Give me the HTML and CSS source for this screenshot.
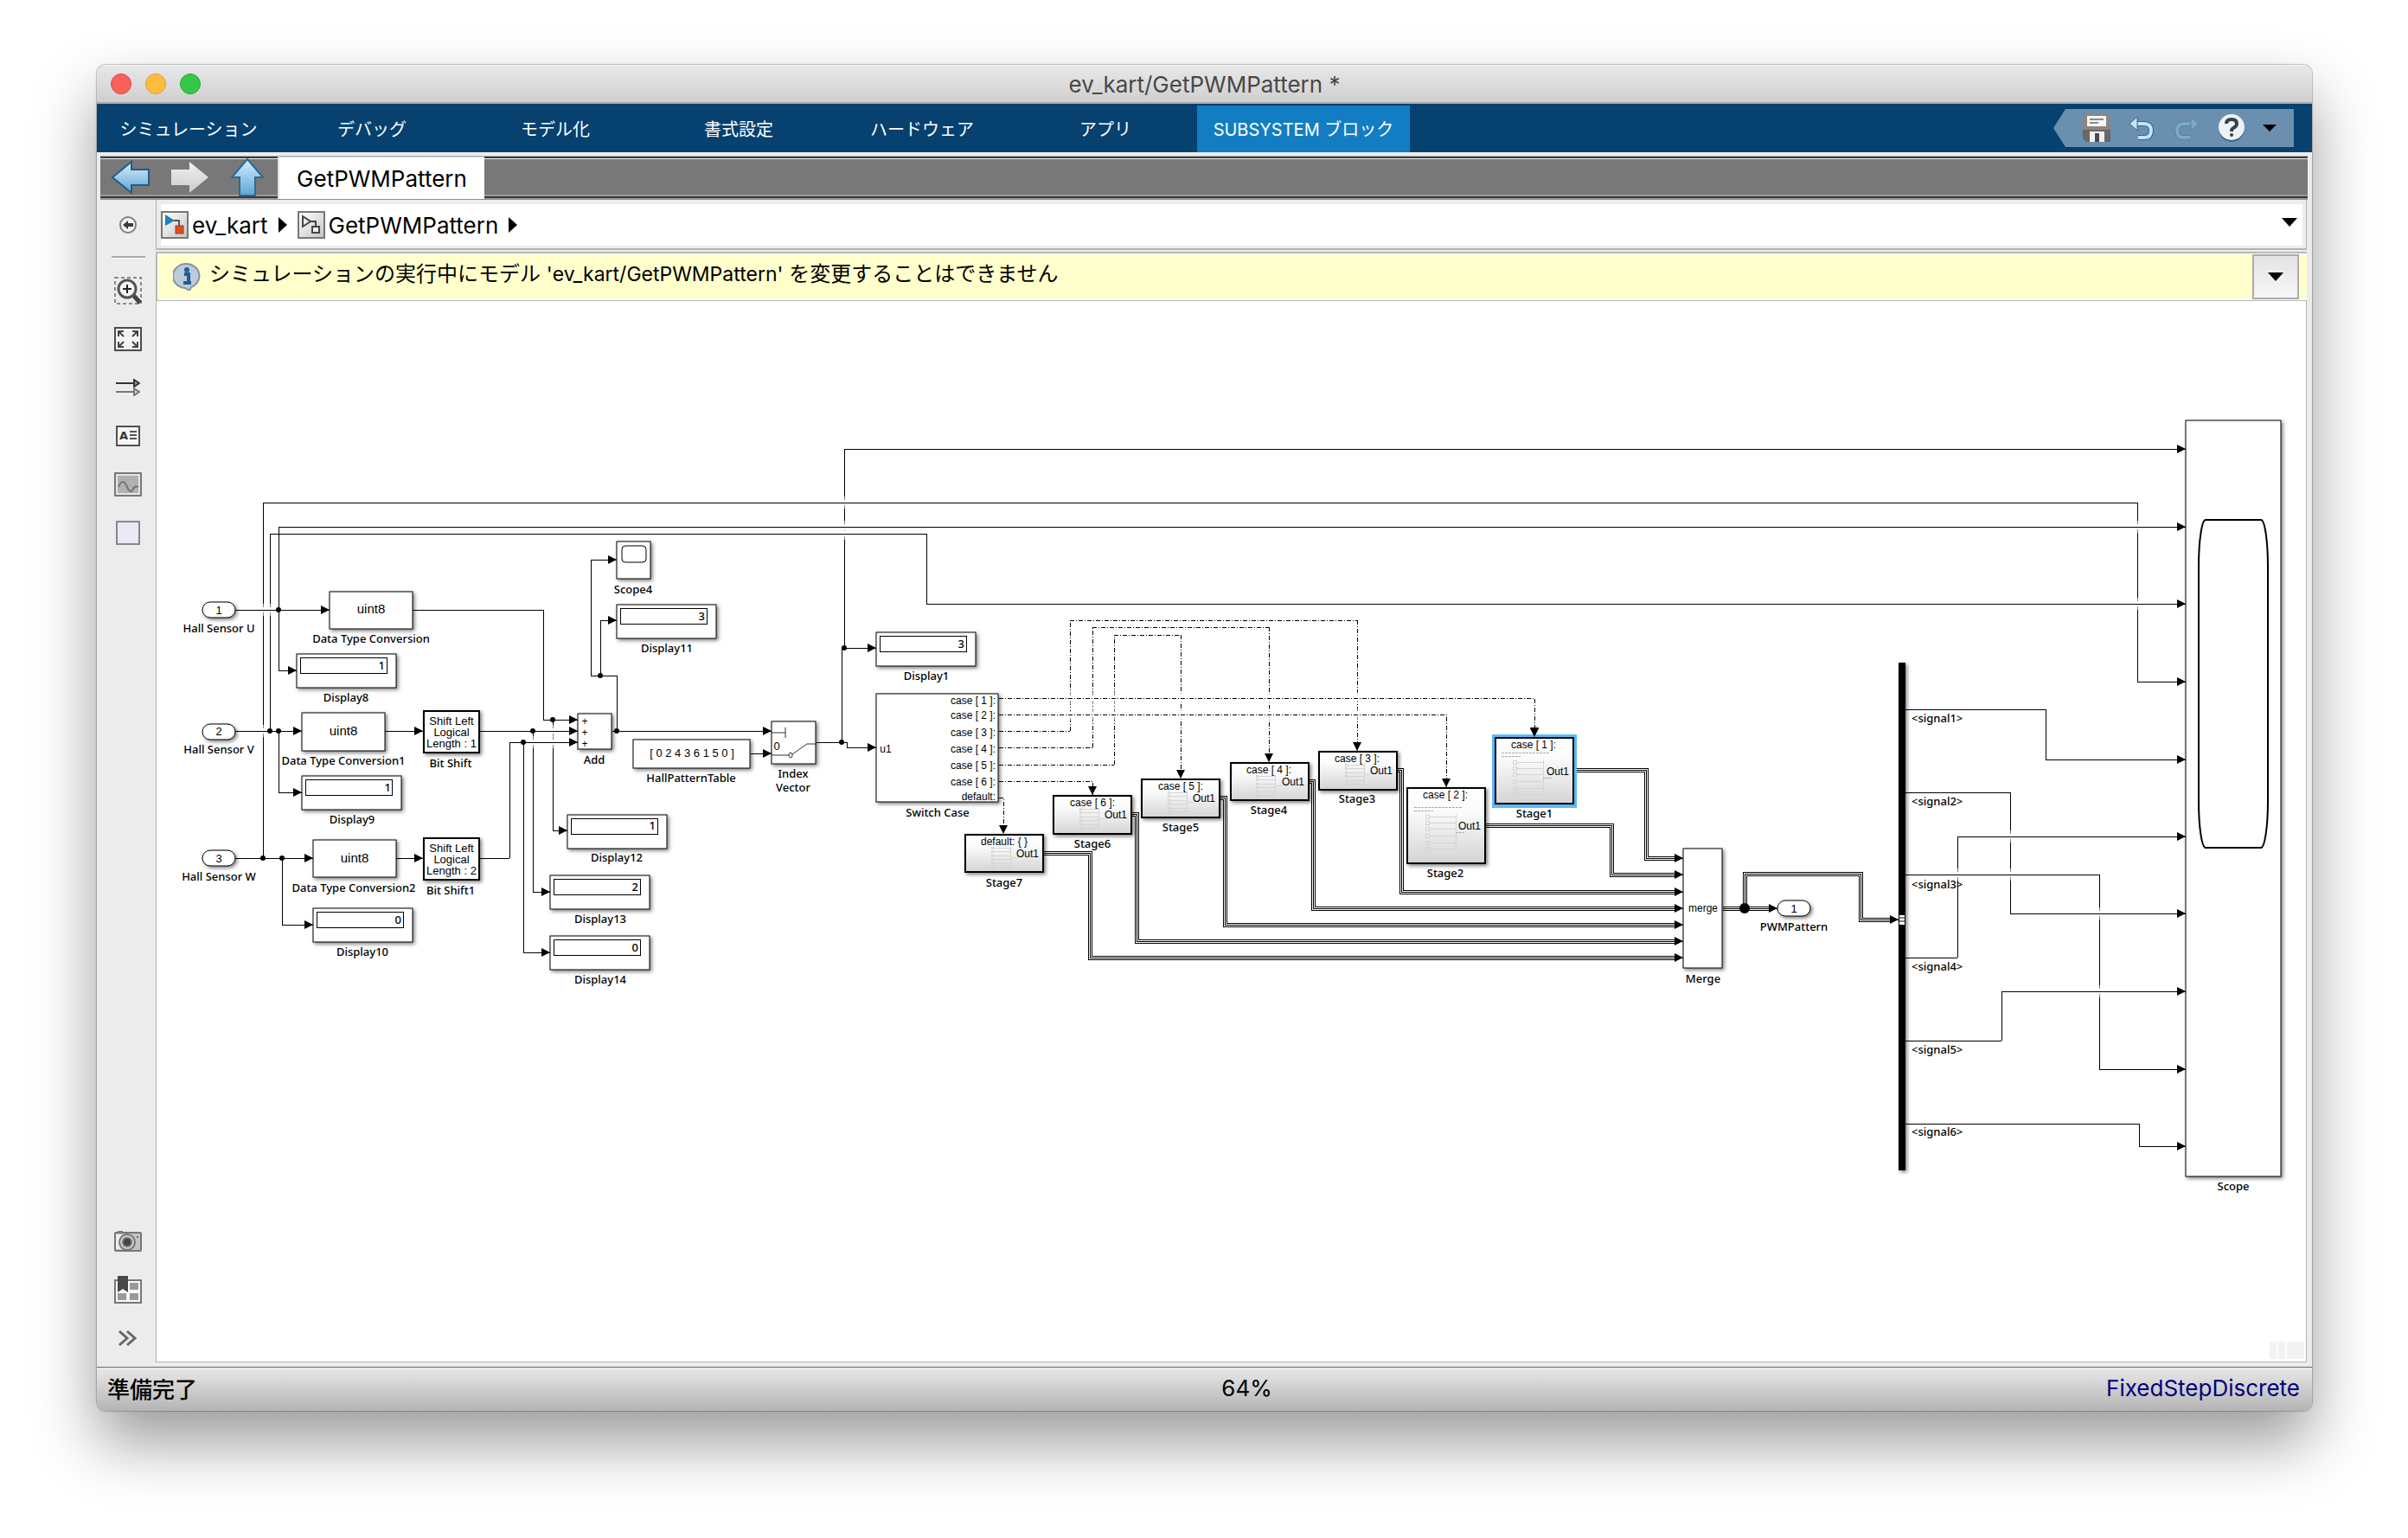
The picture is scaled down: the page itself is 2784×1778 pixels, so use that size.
FILE: index.html
```html
<!DOCTYPE html>
<html lang="ja">
<head>
<meta charset="utf-8">
<title>ev_kart/GetPWMPattern *</title>
<link rel="stylesheet" href="styles.css">
</head>
<body>
<div class="window">
  <header class="titlebar">
    <div class="lights"><button class="light red" aria-label="閉じる"></button><button class="light yellow" aria-label="しまう"></button><button class="light green" aria-label="拡大"></button></div>
    <h1 class="title">ev_kart/GetPWMPattern *</h1>
  </header>

  <nav class="toolstrip">
    <button class="strip-tab">シミュレーション</button>
    <button class="strip-tab">デバッグ</button>
    <button class="strip-tab">モデル化</button>
    <button class="strip-tab">書式設定</button>
    <button class="strip-tab">ハードウェア</button>
    <button class="strip-tab">アプリ</button>
    <button class="strip-tab active">SUBSYSTEM ブロック</button>
    <div class="quick">
      <button class="tool" aria-label="保存"><svg width="32" height="32" viewBox="0 0 32 32"><path d="M0 0h32v32H4l-4-4z" fill="#6b6765"/><path d="M0 0h32v18H0z" fill="#8b8684"/><path d="M5 2h22v12H5z" fill="#f4f4f4"/><path d="M8 6h16M8 10h10" stroke="#8a8a8a" stroke-width="2"/><path d="M8 20h17v12H8z" fill="#f0f0f0"/><path d="M14 22h5v10h-5z" fill="#4a4a4a"/></svg></button>
      <button class="tool" aria-label="元に戻す"><svg width="32" height="32" viewBox="0 0 32 32"><path d="M7 11h12q8 0 8 8t-8 8h-7" fill="none" stroke="#2f6590" stroke-width="6"/><path d="M7 11h12q8 0 8 8t-8 8h-7" fill="none" stroke="#c3e2f3" stroke-width="4"/><path d="M11 3v16L2 11z" fill="#c9e6f5" stroke="#2f6590"/></svg></button>
      <button class="tool" aria-label="やり直し"><svg width="32" height="32" viewBox="0 0 32 32"><path d="M24 11H13q-8 0-8 8t8 8h7" fill="none" stroke="#4f83aa" stroke-width="6"/><path d="M24 11H13q-8 0-8 8t8 8h7" fill="none" stroke="#7fa8c5" stroke-width="4"/><path d="M21 3v16l9-8z" fill="#7fa8c5" stroke="#4f83aa"/></svg></button>
      <button class="tool" aria-label="ヘルプ"><svg width="32" height="32" viewBox="0 0 32 32"><circle cx="16" cy="17" r="15" fill="#38658a"/><circle cx="16" cy="15" r="15" fill="#eef2f5"/><path d="M10 11q0-5 6-5t6 5q0 3-4 5-2 1-2 4" fill="none" stroke="#33424f" stroke-width="4"/><circle cx="16" cy="24" r="2" fill="#33424f"/></svg></button>
      <button class="tool narrow" aria-label="その他"><svg width="16" height="8" viewBox="0 0 16 8"><path d="M0 0h16L8 8z"/></svg></button>
    </div>
  </nav>

  <div class="docbar">
    <div class="nav-arrows">
      <button class="nav-btn" aria-label="戻る"><svg width="46" height="40" viewBox="0 0 46 40"><path d="M2 20L24 2v9h20v18H24v9z" fill="url(#blue)" stroke="#245b86" stroke-width="2"/></svg></button>
      <button class="nav-btn" aria-label="進む"><svg width="46" height="40" viewBox="0 0 46 40"><path d="M44 20L22 2v9H1v18h21v9z" fill="url(#silver)"/></svg></button>
      <button class="nav-btn" aria-label="上へ"><svg width="40" height="44" viewBox="0 0 40 44"><path d="M20 1L38 22h-9v21H11V22H2z" fill="url(#blue)" stroke="#2c6a9a" stroke-width="2"/></svg></button>
    </div>
    <button class="doc-tab">GetPWMPattern</button>
  </div>

  <div class="work">
    <aside class="palette">
      <button class="tool" aria-label="エクスプローラーを隠す"><svg width="24" height="24" viewBox="0 0 24 24"><circle cx="12" cy="12" r="9" fill="#f4f4f4" stroke="#808080" stroke-width="2"/><path d="M6 12l6-5v3h6v4h-6v3z" fill="#3c3c3c"/></svg></button>
      <hr class="rule">
      <button class="tool" aria-label="ズーム"><svg width="32" height="32" viewBox="0 0 32 32"><rect x="1" y="1" width="30" height="30" fill="none" stroke="#8a8a8a" stroke-width="2" stroke-dasharray="4 3"/><path d="M21 20l9 10" stroke="#444" stroke-width="5"/><circle cx="15" cy="14" r="10" fill="#f6f6f6" stroke="#555" stroke-width="3"/><path d="M10 14h10M15 9v10" stroke="#222" stroke-width="2"/></svg></button>
      <button class="tool" aria-label="ビューに合わせる"><svg width="32" height="28" viewBox="0 0 32 28"><rect x="1" y="1" width="30" height="26" fill="#f3f3f3" stroke="#4c4c4c" stroke-width="2"/><path d="M5 11V5h6M21 5h6v6M27 17v6h-6M11 23H5v-6M5 5l6 6M27 5l-6 6M27 23l-6-6M5 23l6-6" fill="none" stroke="#444" stroke-width="2"/></svg></button>
      <button class="tool" aria-label="サンプル時間"><svg width="28" height="20" viewBox="0 0 28 20"><path d="M0 5h22" stroke="#333" stroke-width="2"/><path d="M21 1l6 4-6 4z" fill="#999" stroke="#333" stroke-width="2"/><path d="M0 15h22" stroke="#777" stroke-width="2"/><path d="M21 11l6 4-6 4z" fill="#ccc" stroke="#777" stroke-width="2"/></svg></button>
      <button class="tool" aria-label="注釈"><svg width="28" height="24" viewBox="0 0 28 24"><rect x="1" y="1" width="26" height="22" fill="#f5f5f7" stroke="#505050" stroke-width="2"/><text x="4" y="16" class="glyph">A</text><path d="M16 7h8M16 11h8M16 15h8" stroke="#555" stroke-width="2"/></svg></button>
      <button class="tool" aria-label="イメージ"><svg width="32" height="28" viewBox="0 0 32 28"><rect x="1" y="1" width="30" height="26" fill="#e6e6e6" stroke="#777" stroke-width="2"/><path d="M4 4h24v20H4z" fill="#b0b0b0"/><path d="M5 17q5-12 10 0 4 9 7 2 2-4 6-2" fill="none" stroke="#777" stroke-width="2"/></svg></button>
      <button class="tool" aria-label="領域"><svg width="28" height="28" viewBox="0 0 28 28"><rect x="1" y="1" width="26" height="26" fill="#e8e8f7" stroke="#888" stroke-width="2"/></svg></button>
      <span class="spacer"></span>
      <button class="tool" aria-label="スクリーンショット"><svg width="32" height="26" viewBox="0 0 32 26"><path d="M4 1h6v3H4z" fill="#777"/><rect x="1" y="3" width="30" height="21" rx="1" fill="#c4c4c4" stroke="#777" stroke-width="2"/><path d="M2 5h6v17H2z" fill="#eee"/><circle cx="15" cy="14" r="9" fill="#ccc" stroke="#777" stroke-width="2"/><circle cx="15" cy="14" r="5" fill="#444" stroke="#777" stroke-width="2"/><circle cx="27" cy="8" r="1" fill="#555"/></svg></button>
      <button class="tool" aria-label="モデルブラウザー"><svg width="32" height="32" viewBox="0 0 32 32"><rect x="1" y="5" width="30" height="26" fill="#fafafa" stroke="#777" stroke-width="2"/><path d="M18 8h10v8H18zM18 20h10v8H18zM4 20h10v8H4z" fill="#999"/><path d="M4 0h12v19l-6-4-6 4z" fill="#484848"/></svg></button>
      <button class="tool" aria-label="展開"><svg width="22" height="20" viewBox="0 0 22 20"><path d="M1 2l9 8-9 8M10 2l9 8-9 8" fill="none" stroke="#666" stroke-width="3"/></svg></button>
    </aside>

    <main class="editor">
      <div class="crumbs">
        <div class="crumb-field">
          <a class="crumb" href="#root"><svg width="32" height="32" viewBox="0 0 32 32"><rect x="1" y="1" width="30" height="30" fill="url(#tile)" stroke="#777" stroke-width="2"/><path d="M5 4l11 7-11 6z" fill="#1d7fc0"/><path d="M15 11h6v6" fill="none" stroke="#555" stroke-width="2"/><rect x="17" y="17" width="9" height="9" fill="#d9501e" stroke="#a33" stroke-width="1"/></svg>ev_kart</a>
          <svg class="sep" width="10" height="18" viewBox="0 0 10 18"><path d="M0 0l10 9-10 9z"/></svg>
          <a class="crumb" href="#sub"><svg width="32" height="32" viewBox="0 0 32 32"><rect x="1" y="1" width="30" height="30" fill="url(#tile)" stroke="#777" stroke-width="2"/><path d="M6 6l9 6-9 6z" fill="#eee" stroke="#444" stroke-width="2"/><path d="M15 12h6v5" fill="none" stroke="#444" stroke-width="2"/><rect x="17" y="18" width="8" height="7" fill="#eee" stroke="#444" stroke-width="2"/></svg>GetPWMPattern</a>
          <svg class="sep" width="10" height="18" viewBox="0 0 10 18"><path d="M0 0l10 9-10 9z"/></svg>
          <button class="crumb-menu" aria-label="履歴"><svg width="18" height="10" viewBox="0 0 18 10"><path d="M0 0h18L9 10z"/></svg></button>
        </div>
      </div>

      <div class="notice">
        <svg width="32" height="32" viewBox="0 0 32 32"><path d="M16 1a15 14 0 0 1 5 27l-2 4-5-3A15 14 0 0 1 16 1z" fill="#bccbd8" stroke="#8595a3" stroke-width="2"/><path d="M13 13h5v10M12 23h9" fill="none" stroke="#1c5f95" stroke-width="4"/><circle cx="16" cy="8" r="3" fill="#1c5f95"/></svg>
        <p class="notice-text">シミュレーションの実行中にモデル <span class="latin">'ev_kart/GetPWMPattern'</span> を変更することはできません</p>
        <button class="notice-menu" aria-label="通知メニュー"><svg width="18" height="10" viewBox="0 0 18 10"><path d="M0 0h18L9 10z"/></svg></button>
      </div>

      <div class="canvas">
        <svg class="diagram" width="100%" height="100%">
          <defs>
            <linearGradient id="blue" x1="0" y1="0" x2="0" y2="1"><stop offset="0" stop-color="#d6effb"/><stop offset="1" stop-color="#5fa5d6"/></linearGradient>
            <linearGradient id="silver" x1="0" y1="0" x2="0" y2="1"><stop offset="0" stop-color="#f0f0f0"/><stop offset="1" stop-color="#cccccc"/></linearGradient>
            <linearGradient id="tile" x1="0" y1="0" x2="1" y2="1"><stop offset="0" stop-color="#ffffff"/><stop offset="1" stop-color="#c4c4c4"/></linearGradient>
            <linearGradient id="shade" x1="0" y1="0" x2="0" y2="1"><stop offset="0" stop-color="#ffffff"/><stop offset="0.3" stop-color="#fbfbfb"/><stop offset="1" stop-color="#d4d4d4"/></linearGradient>
            <marker id="tip" markerUnits="userSpaceOnUse" markerWidth="12" markerHeight="12" refX="10" refY="5" orient="auto"><path d="M0 0L10 5L0 10z"/></marker>
            <g id="gap"><rect x="-2" y="-7" width="5" height="14" fill="#fff" opacity="0.5"/><rect x="-2" y="-3" width="5" height="6" fill="#fff"/></g>
            <g id="display"><rect class="block" width="115" height="39"/><rect class="inner" x="4" y="4" width="100" height="18"/></g>
            <g id="port"><rect class="block" width="38" height="18" rx="9"/></g>
            <g id="mini" class="mini"><path d="M0 0h20M0 4h20M0 9h20M0 13h20M0 18h20M0 22h20M20 -1v25M20 11h8"/><path d="M-2 -1h2v2h-2zM-2 3h2v2h-2zM-2 8h2v2h-2zM-2 12h2v2h-2zM-2 17h2v2h-2zM-2 21h2v2h-2z"/></g>
            <g id="minitall" class="mini"><path d="M0 0h31M0 7h31M0 14h31M0 22h31M0 30h31M0 37h31M31 -3v43"/><path d="M-4 -2h4v4h-4zM-4 5h4v4h-4zM-4 12h4v4h-4zM-4 20h4v4h-4zM-4 28h4v4h-4zM-4 35h4v4h-4z"/><path d="M31 18h10M-17 -11h56M-17 -7h22" stroke="#aaa" stroke-dasharray="3 1"/></g>
            <g id="buses"><path d="M1820 890H1903V992H1938"/><path d="M1718 954H1863V1011H1938"/><path d="M1616 890H1620V1031H1938"/><path d="M1513 903H1518V1050H1938"/><path d="M1411 922H1416V1069H1938"/><path d="M1309 941H1314V1088H1938"/><path d="M1207 986H1260V1107H1938"/><path d="M1992 1050H2046"/><path d="M2017 1050V1010H2151V1063H2187"/></g>
          </defs>
          <g transform="translate(-181 -348)">
            <!-- vertical wire runs -->
            <g class="wire">
              <path d="M304 992V581M312 845V617M322 775V609M322 845V916M326 992V1069M628 705V832M639 832V960M616 845V1031M605 858V1101M589 992V858"/>
              <path d="M713 845V781M683 781V647M694 781V717M973 858V749M976 749V519M979 858V864M1071 617V698"/>
              <path d="M2471 581V788M2365 820V878M2324 916V1056M2427 1011V1236M2263 1107V967M2314 1203V1146M2473 1299V1325"/>
            </g>
            <g class="wire dash">
              <path d="M1237 845V717M1263 864V725M1288 884V734"/>
              <path d="M1365 734V900" marker-end="url(#tip)"/><path d="M1467 725V881" marker-end="url(#tip)"/><path d="M1569 717V868" marker-end="url(#tip)"/>
            </g>
            <!-- breaks where wires cross -->
            <use href="#gap" x="304" y="705"/><use href="#gap" x="304" y="845"/><use href="#gap" x="312" y="705"/>
            <use href="#gap" x="639" y="845"/><use href="#gap" x="639" y="858"/><use href="#gap" x="616" y="858"/>
            <use href="#gap" x="976" y="581"/><use href="#gap" x="976" y="609"/><use href="#gap" x="976" y="617"/>
            <use href="#gap" x="2471" y="609"/><use href="#gap" x="2471" y="698"/><use href="#gap" x="2324" y="967"/><use href="#gap" x="2324" y="1011"/>
            <use href="#gap" x="2427" y="1056"/><use href="#gap" x="2427" y="1146"/><use href="#gap" x="2263" y="1011"/>
            <use href="#gap" x="1237" y="807"/><use href="#gap" x="1237" y="826"/><use href="#gap" x="1263" y="807"/><use href="#gap" x="1263" y="826"/>
            <use href="#gap" x="1288" y="807"/><use href="#gap" x="1288" y="826"/><use href="#gap" x="1365" y="807"/><use href="#gap" x="1365" y="826"/>
            <use href="#gap" x="1467" y="807"/><use href="#gap" x="1467" y="826"/><use href="#gap" x="1569" y="807"/><use href="#gap" x="1569" y="826"/>
            <!-- horizontal runs ending in arrowheads -->
            <g class="wire arrows">
              <path d="M272 705H381"/><path d="M322 775H343"/><path d="M272 845H349"/><path d="M322 916H349"/><path d="M272 992H362"/><path d="M326 1069H362"/>
              <path d="M445 845H489"/><path d="M458 992H489"/><path d="M628 832H668"/><path d="M555 845H668"/><path d="M589 858H668"/>
              <path d="M683 647H713"/><path d="M694 717H713"/><path d="M639 960H656"/><path d="M616 1031H636"/><path d="M605 1101H636"/>
              <path d="M708 845H892"/><path d="M868 871H892"/><path d="M979 864H1013"/><path d="M976 749H1013"/>
              <path d="M976 519H2527"/><path d="M322 609H2527"/><path d="M1071 698H2527"/><path d="M2471 788H2527"/><path d="M2365 878H2527"/>
              <path d="M2263 967H2527"/><path d="M2324 1056H2527"/><path d="M2314 1146H2527"/><path d="M2427 1236H2527"/><path d="M2473 1325H2527"/>
            </g>
            <g class="wire">
              <path d="M477 705H628M555 992H589M304 581H2471M312 617H1071M683 781H713M944 858H979M973 749H976"/>
              <path d="M2203 820H2365M2203 916H2324M2203 1011H2427M2203 1107H2263M2203 1203H2314M2203 1299H2473"/>
            </g>
            <g class="wire dash">
              <path d="M1155 845H1237M1155 864H1263M1155 884H1288M1237 717H1569M1263 725H1467M1288 734H1365"/>
              <path d="M1155 807H1774V851" marker-end="url(#tip)"/><path d="M1155 826H1672V910" marker-end="url(#tip)"/>
              <path d="M1155 903H1263V919" marker-end="url(#tip)"/><path d="M1155 922H1160V964" marker-end="url(#tip)"/>
            </g>
            <!-- bus lines: three strands -->
            <use href="#buses" class="bus outer"/><use href="#buses" class="bus middle"/><use href="#buses" class="bus core"/>
            <g class="wire arrows">
              <path d="M1936 992H1946"/><path d="M1936 1011H1946"/><path d="M1936 1031H1946"/><path d="M1936 1050H1946"/><path d="M1936 1069H1946"/><path d="M1936 1088H1946"/><path d="M1936 1107H1946"/><path d="M2045 1050H2055"/><path d="M2185 1063H2195"/>
            </g>
            <g class="dots">
              <circle cx="322" cy="705" r="3"/><circle cx="312" cy="845" r="3"/><circle cx="322" cy="845" r="3"/><circle cx="304" cy="992" r="3"/><circle cx="326" cy="992" r="3"/>
              <circle cx="639" cy="832" r="3"/><circle cx="616" cy="845" r="3"/><circle cx="605" cy="858" r="3"/><circle cx="713" cy="845" r="3"/><circle cx="694" cy="781" r="3"/>
              <circle cx="973" cy="858" r="3"/><circle cx="976" cy="749" r="3"/><circle cx="2017" cy="1050" r="6"/>
            </g>

            <!-- ports -->
            <use href="#port" x="234" y="696"/><use href="#port" x="234" y="837"/><use href="#port" x="234" y="983"/><use href="#port" x="2055" y="1041"/>
            <!-- plain blocks -->
            <rect class="block" x="381" y="684" width="96" height="43"/><rect class="block" x="349" y="824" width="96" height="44"/><rect class="block" x="362" y="971" width="96" height="43"/>
            <rect class="block heavy" x="490" y="822" width="64" height="48"/><rect class="block heavy" x="490" y="969" width="64" height="48"/>
            <rect class="block" x="668" y="825" width="39" height="41"/>
            <rect class="block" x="713" y="626" width="39" height="43"/><rect class="round slim" x="719" y="631" width="28" height="19" rx="4"/>
            <rect class="block" x="732" y="855" width="135" height="33"/>
            <rect class="block" x="892" y="834" width="51" height="49"/>
            <path class="thin" d="M892 847H908M908 841V853M892 873H912M916 872L933 860H944"/><ellipse class="thin" cx="914" cy="873" rx="2" ry="3"/>
            <rect class="block" x="1013" y="802" width="141" height="125"/>
            <rect class="block" x="1946" y="981" width="45" height="138"/>
            <rect class="bar" x="2195" y="766" width="8" height="587"/><path d="M2196 1058h6v11h-6z" fill="#fff"/><path d="M2196 1061h6M2196 1065h6" stroke="#000"/>
            <rect class="block" x="2527" y="486" width="110" height="874"/><rect class="round" x="2542" y="601" width="80" height="379" rx="8" ry="54"/>
            <!-- displays -->
            <use href="#display" x="343" y="756"/><use href="#display" x="349" y="897"/><use href="#display" x="362" y="1050"/><use href="#display" x="713" y="699"/>
            <use href="#display" x="656" y="942"/><use href="#display" x="636" y="1012"/><use href="#display" x="636" y="1082"/><use href="#display" x="1013" y="731"/>
            <!-- stages -->
            <rect class="halo" x="1725" y="849" width="98" height="85"/><path d="M1769 842h10l-5 10z"/>
            <rect class="block heavy stage flat" x="1729" y="853" width="90" height="76"/><rect class="block heavy stage" x="1627" y="911" width="90" height="87"/>
            <rect class="block heavy stage" x="1525" y="869" width="90" height="44"/><rect class="block heavy stage" x="1423" y="882" width="90" height="43"/>
            <rect class="block heavy stage" x="1320" y="901" width="90" height="44"/><rect class="block heavy stage" x="1218" y="920" width="90" height="44"/>
            <rect class="block heavy stage" x="1116" y="965" width="90" height="43"/>
            <use href="#minitall" x="1753" y="881"/><use href="#minitall" x="1652" y="944"/>
            <use href="#mini" x="1557" y="884"/><use href="#mini" x="1454" y="897"/><use href="#mini" x="1352" y="916"/><use href="#mini" x="1250" y="935"/><use href="#mini" x="1148" y="980"/>
            <g fill="#f2f2f2"><rect x="2624" y="1551" width="8" height="20"/><rect x="2634" y="1551" width="8" height="20"/><rect x="2644" y="1551" width="20" height="20"/></g>

            <!-- block names -->
            <g class="name">
              <text x="253" y="731">Hall Sensor U</text><text x="253" y="871">Hall Sensor V</text><text x="253" y="1018">Hall Sensor W</text>
              <text x="429" y="743">Data Type Conversion</text><text x="397" y="884">Data Type Conversion1</text><text x="409" y="1031">Data Type Conversion2</text>
              <text x="400" y="811">Display8</text><text x="407" y="952">Display9</text><text x="419" y="1105">Display10</text>
              <text x="521" y="887">Bit Shift</text><text x="521" y="1034">Bit Shift1</text><text x="687" y="883">Add</text>
              <text x="732" y="686">Scope4</text><text x="771" y="754">Display11</text><text x="713" y="996">Display12</text><text x="694" y="1067">Display13</text><text x="694" y="1137">Display14</text>
              <text x="799" y="904">HallPatternTable</text><text x="917" y="899">Index</text><text x="917" y="915">Vector</text>
              <text x="1071" y="786">Display1</text><text x="1084" y="944">Switch Case</text>
              <text x="1161" y="1025">Stage7</text><text x="1263" y="980">Stage6</text><text x="1365" y="961">Stage5</text><text x="1467" y="941">Stage4</text><text x="1569" y="928">Stage3</text><text x="1671" y="1014">Stage2</text><text x="1774" y="945">Stage1</text>
              <text x="1969" y="1136">Merge</text><text x="2074" y="1076">PWMPattern</text><text x="2582" y="1376">Scope</text>
            </g>
            <g class="name start">
              <text x="2210" y="835">&lt;signal1&gt;</text><text x="2210" y="931">&lt;signal2&gt;</text><text x="2210" y="1027">&lt;signal3&gt;</text><text x="2210" y="1122">&lt;signal4&gt;</text><text x="2210" y="1218">&lt;signal5&gt;</text><text x="2210" y="1313">&lt;signal6&gt;</text>
            </g>
            <g class="name end">
              <text x="445" y="774">1</text><text x="452" y="915">1</text><text x="464" y="1068">0</text><text x="815" y="717">3</text><text x="758" y="959">1</text><text x="738" y="1030">2</text><text x="738" y="1100">0</text><text x="1115" y="749">3</text>
            </g>
            <!-- block faces -->
            <g class="face large"><text x="429" y="709">uint8</text><text x="397" y="850">uint8</text><text x="410" y="997">uint8</text></g>
            <g class="face medium">
              <text x="253" y="710">1</text><text x="253" y="850">2</text><text x="253" y="997">3</text><text x="2074" y="1055">1</text>
              <text x="522" y="838">Shift Left</text><text x="522" y="851">Logical</text><text x="522" y="864">Length : 1</text>
              <text x="522" y="985">Shift Left</text><text x="522" y="998">Logical</text><text x="522" y="1011">Length : 2</text>
              <text x="800" y="875">[ 0 2 4 3 6 1 5 0 ]</text><text x="898" y="867">0</text>
            </g>
            <g class="face">
              <text x="676" y="838">+</text><text x="676" y="851">+</text><text x="676" y="864">+</text><text x="1969" y="1054">merge</text><text x="1024" y="870">u1</text>
              <text x="1161" y="977">default: { }</text><text x="1263" y="932">case [ 6 ]:</text><text x="1365" y="913">case [ 5 ]:</text><text x="1467" y="894">case [ 4 ]:</text><text x="1569" y="881">case [ 3 ]:</text><text x="1671" y="923">case [ 2 ]:</text><text x="1773" y="865">case [ 1 ]:</text>
            </g>
            <g class="face end">
              <text x="1151" y="814">case [ 1 ]:</text><text x="1151" y="831">case [ 2 ]:</text><text x="1151" y="851">case [ 3 ]:</text><text x="1151" y="870">case [ 4 ]:</text><text x="1151" y="889">case [ 5 ]:</text><text x="1151" y="908">case [ 6 ]:</text><text x="1151" y="925">default:</text>
              <text x="1201" y="991">Out1</text><text x="1303" y="946">Out1</text><text x="1405" y="927">Out1</text><text x="1508" y="908">Out1</text><text x="1610" y="895">Out1</text><text x="1712" y="959">Out1</text><text x="1814" y="896">Out1</text>
            </g>
          </g>
        </svg>
      </div>
    </main>
  </div>

  <footer class="status">
    <span class="state">準備完了</span>
    <span class="zoom">64%</span>
    <a class="solver" href="#solver">FixedStepDiscrete</a>
  </footer>
</div>
</body>
</html>
```
FILE: styles.css
```css
* { box-sizing: border-box; }
body {
  margin: 0;
  min-height: 100vh;
  padding: 75px 111px 147px 112px;
  display: flex;
  background: #fff;
  font-family: Inter, "Noto Sans CJK JP", sans-serif;
  font-size: 26px;
  color: #000;
}
button { margin: 0; padding: 0; border: 0; background: none; font: inherit; color: inherit; }
a { color: inherit; text-decoration: none; }
svg { display: block; flex: none; }
.window {
  flex: 1;
  display: flex;
  flex-direction: column;
  background: #ececec;
  border-radius: 10px;
  overflow: hidden;
  box-shadow: 0 0 1px 1px rgba(0, 0, 0, 0.22), 0 36px 72px rgba(0, 0, 0, 0.4);
}
.titlebar {
  height: 45px;
  display: grid;
  grid-template-columns: 1fr auto 1fr;
  align-items: center;
  background: linear-gradient(#e8e8e8, #cfcfcf);
  border-top: 1px solid #f6f6f6;
  border-bottom: 2px solid #ababab;
}
.lights { display: flex; gap: 16px; padding-left: 16px; }
.light { width: 24px; height: 24px; border-radius: 50%; }
.red { background: #fc605c; border: 1px solid #e0443e; }
.yellow { background: #fdbc40; border: 1px solid #dea033; }
.green { background: #34c749; border: 1px solid #27a635; }
.title { margin: 0; padding-top: 2px; font-size: 26px; font-weight: 400; color: #484848; line-height: 40px; }

.toolstrip { height: 56px; display: flex; background: #06416f; color: #fff; padding-top: 2px; }
.strip-tab { width: 212px; padding-bottom: 2px; font-size: 20px; white-space: nowrap; }
.strip-tab.active { width: 246px; background: #137dc3; }
.quick {
  margin: 4px 21px 6px auto;
  width: 278px;
  padding-left: 34px;
  display: flex;
  align-items: center;
  gap: 20px;
  background: #6b90af;
  clip-path: polygon(14px 0, 100% 0, 100% 100%, 14px 100%, 0 50%);
}
.tool { display: flex; align-items: center; justify-content: center; width: 32px; height: 32px; }
.quick .tool.narrow { width: 16px; color: #000; }

.docbar {
  height: 51px;
  margin: 4px 5px 0 4px;
  display: flex;
  border-bottom: 1px solid #8c8c8c;
  background: linear-gradient(#b4b4b4 1px, #3a3a3a 1px 3px, #f4f4f4 3px 4px, #787878 4px 45px, #999 45px 47px, #3a3a3a 47px 49px, #999 49px);
}
.nav-arrows { display: flex; align-items: center; width: 205px; padding-left: 12px; gap: 23px; }
.doc-tab { width: 239px; margin-top: 1px; background: #fff; border-top: 1px solid #ccc; border-left: 2px solid #e0e0e0; }

.work { flex: 1; display: grid; grid-template-columns: 68px minmax(0, 1fr); margin-right: 6px; }
.palette { display: flex; flex-direction: column; align-items: center; gap: 24px; padding: 13px 0 17px 4px; }
.rule { width: 39px; height: 3px; margin: -4px 0 -3px; border: 0; border-top: 2px solid #a8a8a8; border-bottom: 1px solid #fff; }
.spacer { flex: 1; margin-bottom: -24px; }
.glyph { font: 700 13px "DejaVu Sans", sans-serif; fill: #333; }

.editor { display: flex; flex-direction: column; }
.crumbs { height: 58px; padding: 5px 4px 3px 5px; border: 1px solid #b4b4b4; border-width: 0 1px 2px; }
.crumb-field { height: 48px; display: flex; align-items: center; background: #fff; }
.crumb { display: flex; align-items: center; gap: 4px; }
.sep { margin: 0 12px; }
.crumb-menu { margin-left: auto; padding: 0 6px 6px; }
.notice {
  height: 56px;
  margin-top: 2px;
  padding-left: 18px;
  display: flex;
  align-items: center;
  background: #ffffcc;
  border: 1px solid #b8b8b8;
  border-width: 2px 0 0 2px;
  box-shadow: inset 0 1px #fff, inset 0 -2px #fff, inset 1px 0 #fff;
}
.notice-text { margin: 0 0 0 10px; font-size: 24px; line-height: 32px; padding-bottom: 6px; }
.latin { font-size: 23px; }
.notice-menu {
  width: 54px;
  height: 52px;
  margin-left: auto;
  margin-right: 9px;
  display: flex;
  align-items: center;
  justify-content: center;
  background: linear-gradient(#e4e4e4, #f6f6f6);
  border: 2px solid #ababab;
}
.canvas { flex: 1; min-height: 1226px; margin-bottom: 5px; background: #fff; border: 1px solid #b4b4b4; overflow: hidden; }

.wire { fill: none; stroke: #000; stroke-width: 1px; shape-rendering: crispEdges; }
.arrows path { marker-end: url(#tip); }
.dash { stroke-dasharray: 5 2 1 2; }
.bus { fill: none; stroke: #000; shape-rendering: crispEdges; }
.outer { stroke-width: 5px; }
.middle { stroke: #fff; stroke-width: 3px; }
.core { stroke-width: 1px; }
.block { fill: #fff; stroke: #000; stroke-width: 1px; filter: drop-shadow(2px 2px 2px rgba(0, 0, 0, 0.5)); }
.heavy { stroke-width: 2px; }
.stage { fill: url(#shade); }
.flat { filter: none; }
.inner { fill: #fff; stroke: #000; shape-rendering: crispEdges; }
.round { fill: #fff; stroke: #000; stroke-width: 2px; }
.slim { stroke-width: 1px; }
.thin { fill: none; stroke: #333; stroke-width: 1px; }
.bar { filter: drop-shadow(2px 2px 2px rgba(0, 0, 0, 0.5)); }
.halo { fill: #5cb8f8; }
.mini { fill: none; stroke: #d4d4d4; stroke-width: 1px; shape-rendering: crispEdges; }
.name { font: 500 13px "Noto Sans", sans-serif; text-anchor: middle; }
.face { font: 12px "Liberation Sans", sans-serif; text-anchor: middle; }
.face.medium { font-size: 13px; }
.face.large { font-size: 15px; }
.start { text-anchor: start; }
.end { text-anchor: end; }

.status {
  height: 51px;
  padding: 0 14px 4px 12px;
  display: grid;
  grid-template-columns: 1fr auto 1fr;
  align-items: center;
  background: linear-gradient(#e8e8e8, #b4b4b4);
  border-top: 1px solid #6c6c6c;
}
.state { font-weight: 500; }
.zoom { padding-left: 100px; }
.solver { text-align: right; color: #000080; }
```
